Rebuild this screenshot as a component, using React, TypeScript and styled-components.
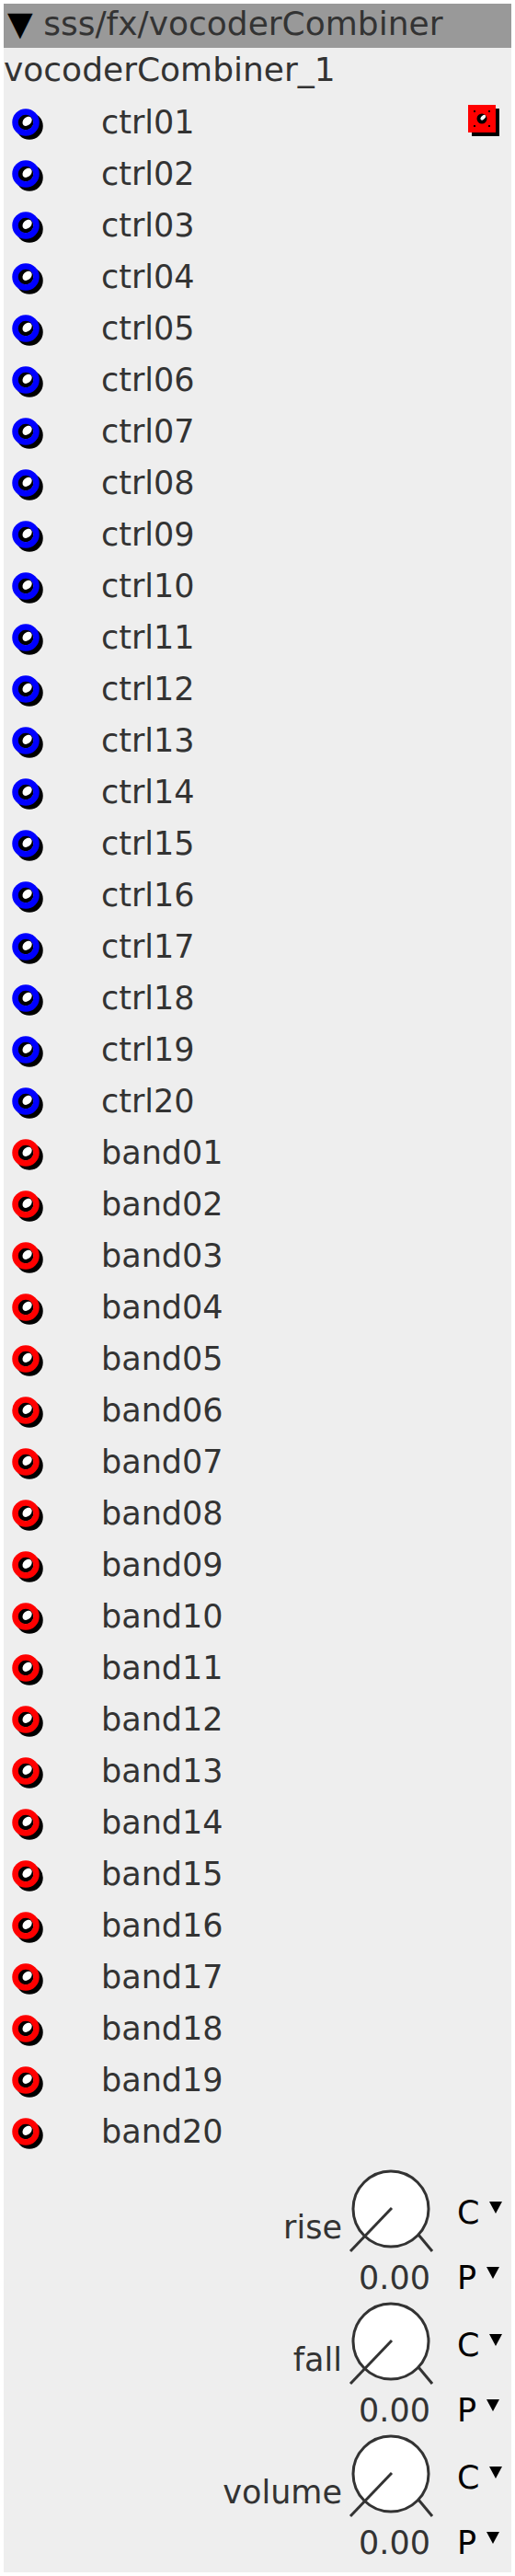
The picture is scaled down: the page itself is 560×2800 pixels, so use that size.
import React from "react";
import styled, { createGlobalStyle } from "styled-components";

const GlobalStyle = createGlobalStyle`
	html, body {
		margin: 0;
		padding: 0;
		background: #ffffff;
	}
`;

const Panel = styled("div")`
	box-sizing: border-box;
	margin: 4px;
	width: 552px;
	min-height: 2792px;
	background: #eeeeee;
	color: #333333;
	font-family: "DejaVu Sans", "Liberation Sans", sans-serif;
	font-size: 35px;
`;

const TitleBar = styled("div")`
	height: 48px;
	padding-left: 4px;
	background: #999999;
	font-size: 36px;
	line-height: 44px;
	white-space: nowrap;
`;

const Arrow = styled("span")`
	color: #000000;
`;

const InstanceName = styled("div")`
	height: 53px;
	font-size: 36px;
	line-height: 48px;
	white-space: nowrap;
`;

const Row = styled("div")`
	display: flex;
	align-items: center;
	height: 56px;
	padding-left: 8px;
	padding-right: 8px;
`;

const RowLabel = styled("span")`
	margin-left: 58px;
	line-height: 40px;
`;

const JackSvg = styled("svg")`
	flex: none;
	display: block;
`;

const OutletSvg = styled("svg")`
	flex: none;
	display: block;
	margin-left: auto;
`;

const Knobs = styled("div")`
	display: flex;
	flex-direction: column;
	gap: 5px;
	padding-top: 12px;
`;

const KnobBlock = styled("div")`
	display: grid;
	grid-template-columns: 1fr 96px 83px;
	grid-template-rows: 96px 40px;
	row-gap: 3px;
	line-height: 40px;
`;

const KnobLabel = styled("span")`
	grid-column: 1;
	grid-row: 1;
	justify-self: end;
	align-self: start;
	margin-top: 44px;
	padding-right: 5px;
	white-space: nowrap;
`;

const KnobSvg = styled("svg")`
	grid-column: 2;
	grid-row: 1;
	display: block;
`;

const KnobValue = styled("span")`
	grid-column: 2;
	grid-row: 2;
	text-align: right;
	padding-right: 5px;
	white-space: nowrap;
`;

interface IModeProps {
	$row: number;
}

const Mode = styled("span")<IModeProps>`
	grid-column: 3;
	grid-row: ${({ $row }) => $row};
	display: flex;
	align-items: center;
	padding-left: 24px;
	color: #000000;
`;

const DropTriangle = styled("span")`
	display: inline-block;
	margin-left: 11px;
	margin-top: -12px;
	width: 0;
	height: 0;
	border-left: 7.5px solid transparent;
	border-right: 7.5px solid transparent;
	border-top: 13px solid #000000;
`;

interface IJackProps {
	color: string;
}

const Jack = ({ color }: IJackProps) => (
	<JackSvg width={40} height={40} viewBox="0 0 40 40">
		<circle cx={20} cy={24} r={11.5} fill="none" stroke="#000" strokeWidth={6.5} />
		<circle cx={16} cy={20} r={8.5} fill="#000" />
		<ellipse cx={17.6} cy={18.8} rx={5.8} ry={4.3} transform="rotate(-45 17.6 18.8)" fill="#fff" />
		<circle cx={16} cy={20} r={11.5} fill="none" stroke={color} strokeWidth={6.5} />
	</JackSvg>
);

const Outlet = () => (
	<OutletSvg width={40} height={40} viewBox="0 0 40 40">
		<rect x={5} y={5} width={30} height={30} fill="#000" />
		<rect x={1} y={1} width={30} height={30} fill="#ff0000" />
		<g fill="#000">
			<rect x={7} y={7} width={2} height={2} />
			<rect x={23} y={7} width={2} height={2} />
			<rect x={7} y={23} width={2} height={2} />
			<rect x={23} y={23} width={2} height={2} />
		</g>
		<circle cx={16} cy={16} r={5.5} fill="#000" />
		<ellipse cx={17.3} cy={14.7} rx={3.4} ry={2} transform="rotate(-45 17.3 14.7)" fill="#fff" />
	</OutletSvg>
);

interface IKnobProps {
	label: string;
	value: string;
}

const Knob = ({ label, value }: IKnobProps) => (
	<KnobBlock>
		<KnobLabel>{label}</KnobLabel>
		<KnobSvg width={96} height={96} viewBox="0 0 96 96">
			<circle cx={48} cy={44} r={41} fill="#fff" stroke="#333" strokeWidth={3} />
			<line x1={49} y1={43} x2={4} y2={90} stroke="#333" strokeWidth={3} />
			<line x1={78} y1={72} x2={93} y2={90} stroke="#333" strokeWidth={3} />
		</KnobSvg>
		<KnobValue>{value}</KnobValue>
		<Mode $row={1}>
			C<DropTriangle />
		</Mode>
		<Mode $row={2}>
			P<DropTriangle />
		</Mode>
	</KnobBlock>
);

const pad = (n: number) => (n < 10 ? `0${n}` : `${n}`);

const ctrls = Array.from({ length: 20 }, (_, i) => `ctrl${pad(i + 1)}`);
const bands = Array.from({ length: 20 }, (_, i) => `band${pad(i + 1)}`);

const knobs: IKnobProps[] = [
	{ label: "rise", value: "0.00" },
	{ label: "fall", value: "0.00" },
	{ label: "volume", value: "0.00" },
];

export default function App() {
	return (
		<>
			<GlobalStyle />
			<Panel>
				<TitleBar>
					<Arrow>▼</Arrow> sss/fx/vocoderCombiner
				</TitleBar>
				<InstanceName>vocoderCombiner_1</InstanceName>

				{ctrls.map((name, i) => (
					<Row key={name}>
						<Jack color="#0000ff" />
						<RowLabel>{name}</RowLabel>
						{i === 0 && <Outlet />}
					</Row>
				))}

				{bands.map((name) => (
					<Row key={name}>
						<Jack color="#ff0000" />
						<RowLabel>{name}</RowLabel>
					</Row>
				))}

				<Knobs>
					{knobs.map((k) => (
						<Knob key={k.label} label={k.label} value={k.value} />
					))}
				</Knobs>
			</Panel>
		</>
	);
}
